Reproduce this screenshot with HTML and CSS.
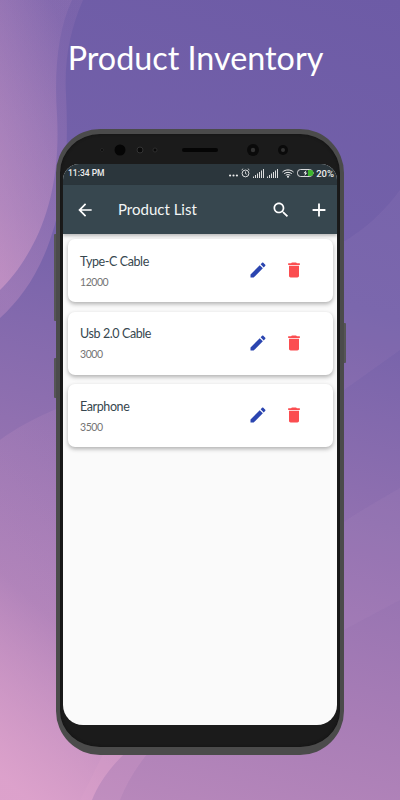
FILE: index.html
```html
<!DOCTYPE html>
<html lang="en">
<head>
<meta charset="utf-8">
<title>Product Inventory</title>
<link rel="stylesheet" href="styles.css">
</head>
<body>
<svg class="waves" viewBox="0 0 400 800" aria-hidden="true">
  <defs>
    <linearGradient id="blobA" x1="0.7" y1="0" x2="0.2" y2="1">
      <stop offset="0" stop-color="#d79ccb" stop-opacity="0.1"/>
      <stop offset="1" stop-color="#d79ccb" stop-opacity="0.32"/>
    </linearGradient>
    <linearGradient id="blobB" x1="0.7" y1="0" x2="0.1" y2="1">
      <stop offset="0" stop-color="#e0a4cd" stop-opacity="0.1"/>
      <stop offset="1" stop-color="#e0a4cd" stop-opacity="0.5"/>
    </linearGradient>
    <linearGradient id="blobC" x1="0.5" y1="0" x2="0.2" y2="1">
      <stop offset="0" stop-color="#e0a4cd" stop-opacity="0.08"/>
      <stop offset="0.55" stop-color="#e0a4cd" stop-opacity="0.22"/>
      <stop offset="1" stop-color="#e0a4cd" stop-opacity="0.9"/>
    </linearGradient>
  </defs>
  <path fill="url(#blobA)" d="M0 0H83C70 30 64 60 66 95C68 140 68 190 50 240C38 275 20 300 0 318Z"/>
  <path fill="url(#blobB)" d="M0 0H72C58 30 54 70 57 115C60 170 50 215 30 250C20 268 10 280 0 290Z"/>
  <path fill="url(#blobC)" d="M0 440C30 418 80 395 140 385V740C115 760 100 780 92 800H0Z"/>
  <path class="w5" d="M400 190C370 230 345 240 330 250V400L400 350Z"/>
  <path class="w5" d="M400 488C370 505 345 520 325 535V640L400 600Z"/>
  <path class="w6" d="M160 740C140 760 128 780 120 800H80L110 740Z"/>
</svg>
<main class="page">
  <h1 class="headline">Product Inventory</h1>
  <div class="phone">
    <span class="key key-l1"></span>
    <span class="key key-l2"></span>
    <span class="key key-r"></span>
    <svg class="earpiece" viewBox="0 0 274 30" aria-hidden="true">
      <circle cx="39" cy="15" r="1.500" fill="#0a0a0a" stroke="#333" stroke-width=".6"/>
      <circle cx="57" cy="15" r="5.500" fill="#050505"/>
      <circle cx="77" cy="15" r="3" fill="#0a0a0a" stroke="#333"/>
      <circle cx="92" cy="15" r="2" fill="#0a0a0a" stroke="#333" stroke-width=".8"/>
      <rect x="119" y="13" width="36" height="4" rx="2" fill="#050505"/>
      <circle cx="190" cy="15" r="6" fill="#0a0a0a"/>
      <circle cx="190" cy="15" r="2.200" fill="#333"/>
      <circle cx="220" cy="15" r="5" fill="#0a0a0a"/>
      <circle cx="220" cy="15" r="2" fill="#333"/>
    </svg>
    <div class="screen">
      <div class="statusbar">
        <span class="clock">11:34 PM</span>
        <span class="status-right">
          <svg class="st-dots" viewBox="0 0 10 3" aria-hidden="true"><circle cx="1.200" cy="1.500" r="1.200"/><circle cx="5" cy="1.500" r="1.200"/><circle cx="8.800" cy="1.500" r="1.200"/></svg>
          <svg class="st-alarm" viewBox="0 0 10 11" aria-hidden="true"><circle cx="5" cy="6" r="3.800" fill="none" stroke="#eee" stroke-width="1"/><path d="M5 3.800V6.200L6.500 7M.6 2.200 2.400.8M9.400 2.200 7.600.8" fill="none" stroke="#eee" stroke-width=".9"/></svg>
          <svg class="st-signal" viewBox="0 0 11 9" aria-hidden="true"><path d="M0 7.500h1V9H0zM2 6h1v3H2zM4 4.500h1V9H4zM6 3h1v6H6zM8 1.500h1V9H8zM10 0h1v9h-1z"/></svg>
          <svg class="st-signal" viewBox="0 0 11 9" aria-hidden="true"><path d="M0 7.500h1V9H0zM2 6h1v3H2zM4 4.500h1V9H4zM6 3h1v6H6zM8 1.500h1V9H8zM10 0h1v9h-1z"/></svg>
          <svg class="st-wifi" viewBox="0 0 12 9" aria-hidden="true"><path d="M.5 3C3.500.3 8.500.3 11.500 3M2.200 4.700C4.300 2.900 7.700 2.900 9.800 4.700M3.800 6.300C5 5.400 7 5.400 8.200 6.300" fill="none" stroke="#eee"/><circle cx="6" cy="7.800" r="1" fill="#eee"/></svg>
          <svg class="st-batt" viewBox="0 0 17 8" aria-hidden="true"><rect x=".5" y=".5" width="15" height="7" rx="3" fill="none" stroke="#eee" stroke-width=".9"/><path d="M16 3v2" stroke="#eee"/><path d="M11 1h2.500a2.500 2.500 0 0 1 0 6H11z" fill="#3db52e"/><path d="M9.500 1 6.500 4.300H8.300L7.300 7 10.300 3.700H8.500Z" fill="#fff"/></svg>
          <span class="pct">20%</span>
        </span>
      </div>
      <header class="appbar">
        <svg class="ic ic-back" viewBox="0 0 24 24" aria-hidden="true"><path d="M20 11H7.830l5.590-5.590L12 4l-8 8 8 8 1.410-1.410L7.830 13H20z"/></svg>
        <span class="appbar-title">Product List</span>
        <svg class="ic ic-search" viewBox="0 0 24 24" aria-hidden="true"><path d="M15.500 14h-.79l-.28-.27C15.410 12.590 16 11.110 16 9.500 16 5.910 13.090 3 9.500 3S3 5.910 3 9.500 5.910 16 9.500 16c1.610 0 3.090-.59 4.230-1.570l.27.28v.79l5 4.990L20.490 19l-4.990-5zm-6 0C7.010 14 5 11.990 5 9.500S7.010 5 9.500 5 14 7.010 14 9.500 11.990 14 9.500 14z"/></svg>
        <svg class="ic ic-add" viewBox="0 0 24 24" aria-hidden="true"><path d="M19 13h-6v6h-2v-6H5v-2h6V5h2v6h6v2z"/></svg>
      </header>
      <section class="list">
        <article class="card">
          <div class="info"><div class="name">Type-C Cable</div><div class="qty">12000</div></div>
          <svg class="act edit" viewBox="0 0 24 24" aria-hidden="true"><path d="M3 17.250V21h3.750L17.810 9.940l-3.750-3.750L3 17.250zM20.710 7.040c.39-.39.39-1.020 0-1.410l-2.340-2.340c-.39-.39-1.020-.39-1.410 0l-1.830 1.830 3.750 3.750 1.830-1.830z"/></svg>
          <svg class="act del" viewBox="0 0 24 24" aria-hidden="true"><path d="M6 19c0 1.100.9 2 2 2h8c1.100 0 2-.9 2-2V7H6v12zM19 4h-3.500l-1-1h-5l-1 1H5v2h14V4z"/></svg>
        </article>
        <article class="card">
          <div class="info"><div class="name">Usb 2.0 Cable</div><div class="qty">3000</div></div>
          <svg class="act edit" viewBox="0 0 24 24" aria-hidden="true"><path d="M3 17.250V21h3.750L17.810 9.940l-3.750-3.750L3 17.250zM20.710 7.040c.39-.39.39-1.020 0-1.410l-2.340-2.340c-.39-.39-1.020-.39-1.410 0l-1.830 1.830 3.750 3.750 1.830-1.830z"/></svg>
          <svg class="act del" viewBox="0 0 24 24" aria-hidden="true"><path d="M6 19c0 1.100.9 2 2 2h8c1.100 0 2-.9 2-2V7H6v12zM19 4h-3.500l-1-1h-5l-1 1H5v2h14V4z"/></svg>
        </article>
        <article class="card">
          <div class="info"><div class="name">Earphone</div><div class="qty">3500</div></div>
          <svg class="act edit" viewBox="0 0 24 24" aria-hidden="true"><path d="M3 17.250V21h3.750L17.810 9.940l-3.750-3.750L3 17.250zM20.710 7.040c.39-.39.39-1.020 0-1.410l-2.340-2.340c-.39-.39-1.020-.39-1.410 0l-1.830 1.830 3.750 3.750 1.830-1.830z"/></svg>
          <svg class="act del" viewBox="0 0 24 24" aria-hidden="true"><path d="M6 19c0 1.100.9 2 2 2h8c1.100 0 2-.9 2-2V7H6v12zM19 4h-3.500l-1-1h-5l-1 1H5v2h14V4z"/></svg>
        </article>
      </section>
    </div>
  </div>
</main>
</body>
</html>
```
FILE: styles.css
```css
* { box-sizing: border-box; }
html, body { margin: 0; padding: 0; }
body {
  width: 400px;
  height: 800px;
  overflow: hidden;
  position: relative;
  background: linear-gradient(196deg, #6d5ba6 0%, #7562aa 35%, #9070b0 58%, #a87db6 80%, #bb8abc 100%);
  font-family: "Lato", sans-serif;
}
.waves { position: absolute; left: 0; top: 0; width: 400px; height: 800px; }
.w5 { fill: rgba(215, 170, 215, 0.07); }
.w6 { fill: rgba(224, 164, 205, 0.22); }
.page {
  position: relative;
  display: flex;
  flex-direction: column;
  align-items: center;
}
.headline {
  margin: 0 9px 0 0;
  height: 129px;
  padding-top: 38px;
  font-size: 32.300px;
  line-height: 40px;
  font-weight: 400;
  color: #fff;
}
.phone {
  position: relative;
  width: 288px;
  height: 626px;
  border: solid #4b4b4b;
  border-width: 5px 4px 8px;
  border-radius: 44px;
  background: #1b1b1b;
  padding: 30px 3px 22px;
  display: flex;
  flex-direction: column;
  box-shadow: inset 0 0 3px #111;
}
.key { position: absolute; width: 2px; background: #555; }
.key-l1 { left: -6px; top: 100px; height: 87px; border-radius: 1px 0 0 1px; }
.key-l2 { left: -6px; top: 224px; height: 40px; border-radius: 1px 0 0 1px; }
.key-r { right: -6px; top: 189px; height: 40px; border-radius: 0 1px 1px 0; }
.earpiece { position: absolute; left: 3px; top: 1px; width: 274px; height: 30px; }
.screen {
  flex: 1;
  display: flex;
  flex-direction: column;
  background: #fafafa;
  border-radius: 16px 16px 20px 20px;
  overflow: hidden;
}
.statusbar {
  height: 21px;
  flex: none;
  background: #2b363c;
  display: flex;
  align-items: center;
  justify-content: space-between;
  padding: 0 3px 3px 5px;
  font-family: "Roboto", sans-serif;
  color: #eee;
}
.clock { font-size: 8.500px; font-weight: 500; }
.status-right { display: flex; align-items: center; gap: 3px; }
.pct { font-size: 9.500px; font-weight: 500; margin-left: -1px; }
.st-dots { width: 9px; height: 3px; margin-top: 5px; fill: #eee; }
.st-alarm { width: 9px; height: 10px; }
.st-signal { width: 11px; height: 9px; fill: #ddd; }
.st-wifi { width: 12px; height: 9px; margin-left: 1px; }
.st-batt { width: 17px; height: 8px; }
.appbar {
  height: 49px;
  flex: none;
  background: #37474f;
  display: flex;
  align-items: center;
  padding: 0 7px 0 12px;
  box-shadow: 0 2px 3px rgba(0, 0, 0, 0.25);
  position: relative;
  color: #fff;
}
.ic { fill: #fff; flex: none; }
.ic-back { width: 20px; height: 20px; }
.ic-search { width: 20px; height: 20px; margin-right: 17px; }
.ic-add { width: 22px; height: 22px; }
.appbar-title {
  flex: 1;
  margin-left: 23px;
  padding-bottom: 2px;
  font-family: "Lato", sans-serif;
  font-size: 15px;
  color: #f2f5f5;
}
.list {
  padding: 5px 4px 0 5px;
  display: flex;
  flex-direction: column;
  gap: 9.500px;
}
.card {
  height: 63px;
  background: #fff;
  border-radius: 7px;
  box-shadow: 0 2px 4px rgba(0, 0, 0, 0.3);
  display: flex;
  align-items: center;
  padding: 0 29px 0 12px;
}
.info { flex: 1; padding-top: 1px; }
.name {
  font-family: "Lato", sans-serif;
  font-size: 12.500px;
  line-height: 16px;
  letter-spacing: -0.4px;
  color: #37474f;
}
.qty {
  margin-top: 5px;
  font-family: "Lato", sans-serif;
  font-size: 10.500px;
  line-height: 14px;
  letter-spacing: -0.45px;
  color: #757575;
}
.act { width: 20px; height: 20px; margin-top: -1px; flex: none; }
.edit { fill: #2b45b0; margin-right: 16px; }
.del { fill: #fb4d50; }
```
